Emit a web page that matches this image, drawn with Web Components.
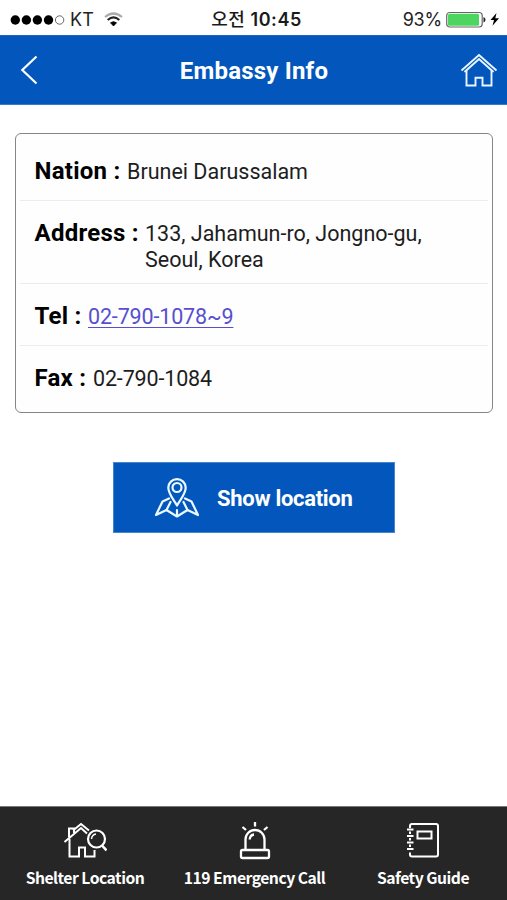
<!DOCTYPE html>
<html lang="en">
<head>
<meta charset="utf-8">
<title>Embassy Info</title>
<style>
html,body{margin:0;height:100%;background:#fff}
body{font-family:Roboto,"Noto Sans CJK KR",sans-serif;overflow:hidden}
</style>
</head>
<body>
<embassy-app></embassy-app>
<script>
const define=(name,html)=>{
  const t=document.createElement('template');t.innerHTML=html;
  customElements.define(name,class extends HTMLElement{
    constructor(){super();this.attachShadow({mode:'open'}).appendChild(t.content.cloneNode(true));}
  });
};

define('status-bar',`<style>
:host{display:grid;grid-template-columns:1fr auto 1fr;align-items:center;height:35px;box-sizing:border-box;padding:4px 8px 0 10px;background:#fff;color:#222;font:19px/30px Inter,"Noto Sans CJK KR",sans-serif}
div{display:flex;align-items:center}
.r{justify-content:flex-end}
svg{display:block;flex:none}
.kt{margin:0 10px 0 5px;font-size:18px;letter-spacing:.2px}
.time{font-weight:600;font-size:18px;color:#1a1a1a;white-space:pre;letter-spacing:.55px;margin-left:4px}
.time span{font-weight:500}
.pct{font-size:18px;margin-right:4px;letter-spacing:-.2px}
</style>
<div><svg width="55" height="12" viewBox="0 0 55 12"><g fill="#000"><circle cx="5.3" cy="6" r="4.7"/><circle cx="16.4" cy="6" r="4.7"/><circle cx="27.4" cy="6" r="4.7"/><circle cx="38.5" cy="6" r="4.7"/></g><circle cx="49.6" cy="6" r="4.2" fill="none" stroke="#666"/></svg>
<span class="kt">KT</span>
<svg width="19" height="15" viewBox="0 0 19 15" fill="none" stroke-width="2.2"><path d="M1 5Q9.500-2 18 5" stroke="#aaa"/><path d="M3.700 8Q9.500 2.800 15.300 8" stroke="#222"/><path d="M6.500 10.800Q9.500 8.500 12.500 10.800L9.500 14Z" fill="#000" stroke="#000" stroke-width=".8"/></svg></div>
<div class="time"><span>오전</span> 10:45</div>
<div class="r"><span class="pct">93%</span><svg width="53" height="18" viewBox="0 0 53 18"><rect x=".7" y="1.500" width="35.500" height="14.500" rx="3" fill="#fff" stroke="#666" stroke-width="1.200"/><rect x="2" y="2.800" width="31" height="12" rx="1.500" fill="#4cd65f"/><path d="M37.500 6q2 .5 2 2.700t-2 2.700z" fill="#222"/><path d="M50.500 2L44.500 9H48L46.500 14.800L53 7.300H49.300Z" fill="#000"/></svg></div>`);

define('title-bar',`<style>
:host{display:grid;grid-template-columns:38px 1fr 38px;align-items:center;height:70px;box-sizing:border-box;padding:0 9px 0 10px;background:#0357bc;border-top:1px solid #1c66bb;border-bottom:1px solid #3a7bc8;color:#fff}
h1{margin:2px 0 0;text-align:center;font-size:24px;line-height:30px;font-weight:700;letter-spacing:.2px}
svg{display:block}
.home{justify-self:end}
</style>
<svg width="38" height="36" viewBox="0 0 38 36" fill="none" stroke="#fff" stroke-width="2.200"><path d="M26.500 4.500L12.300 18L26.500 31.500"/></svg>
<h1><slot></slot></h1>
<svg class="home" width="38" height="36" viewBox="0 0 38 36" fill="none" stroke="#e8f6ff" stroke-width="1.900"><path d="M1.500 18.500L19 3L36.500 18.500"/><path d="M4.500 20L19 7L33.500 20"/><path d="M6.500 18.500V33.500H15.500V25.800H22.500V33.500H31.500V18.500"/></svg>`);

define('info-row',`<style>
:host{display:flex;align-items:baseline;box-sizing:border-box;padding:19px 14px 0 15px;border-bottom:1px solid #ececec;line-height:26px}
:host(:last-child){border-bottom:0}
b{flex:none;width:var(--label);margin-left:-.5px;margin-right:.5px;font-size:24px;font-weight:700;color:#000;white-space:nowrap;letter-spacing:.25px}
.v{font-size:21.500px;color:#1d1d1d;white-space:nowrap;letter-spacing:var(--vs,0)}
</style><b><slot name="label"></slot></b><div class="v"><slot></slot></div>`);

define('info-card',`<style>
:host{display:block;box-sizing:border-box;margin:28px 14px 0 15px;height:280px;border:1px solid #858585;border-radius:6px;padding:0 4px;background:#fefefe}
</style><slot></slot>`);

define('location-button',`<style>
:host{display:flex;align-items:center;box-sizing:border-box;width:282px;height:71px;margin:49px auto 0 113px;padding-left:40px;background:#0357bc;border:1px solid #4684cc;color:#fff;font-size:22px;font-weight:700;line-height:28px;white-space:nowrap;letter-spacing:-.3px}
svg{margin-right:17px;flex:none}
span{margin-top:3px}
</style>
<svg width="46" height="42" viewBox="0 0 46 42" fill="none" stroke="#eafaff" stroke-width="2.200" stroke-linejoin="round" stroke-linecap="round"><path d="M23 28.500C20 23 14.300 17 14.300 10.800A8.700 8.700 0 0 1 31.700 10.800C31.700 17 26 23 23 28.500Z"/><circle cx="23" cy="10.500" r="4.500"/><path d="M15 21.500L8.500 24.500L2 38L12.500 33L23 39.500L33.500 33L44 38L37.500 24.500L31 21.500"/><path d="M16.500 25L12.500 33M29.500 25L33.500 33M23 33V38.500"/></svg><span><slot></slot></span>`);

define('tab-item',`<style>
:host{display:flex;flex-direction:column;align-items:center;color:#fff;font:700 15.700px/24px "Noto Sans CJK KR",sans-serif;white-space:nowrap}
.i{height:47px;display:flex;align-items:flex-end}
.t{margin-top:4px;letter-spacing:-.5px}
</style><div class="i"><slot name="icon"></slot></div><div class="t"><slot></slot></div>`);

define('tab-bar',`<style>
:host{display:grid;grid-template-columns:170px 169px 168px;height:94px;box-sizing:border-box;padding-top:8px;border-top:1px solid #777;background:#262626}
svg{display:block;fill:none;stroke:#fff;stroke-width:2}
</style>
<tab-item><svg slot="icon" width="44" height="40" viewBox="0 0 44 40"><path d="M1.500 20L18 6L24 11.500"/><path d="M6 15.500V6.500H11V11"/><path d="M10 8.500L18 2L26 8.500" /><path d="M6.500 17V34.500H16V25.500H22V34.500H31.500V28"/><circle cx="33.500" cy="17" r="8.500" stroke-width="2.200"/><path d="M28.500 17Q29 12.500 33 12" stroke-width="1.500"/><path d="M39 23.500L43.500 28.500" stroke-width="2.600"/></svg>Shelter Location</tab-item>
<tab-item><svg slot="icon" width="32" height="40" viewBox="0 0 32 40" style="stroke-width:2.300"><path d="M6.500 27.500V17.500A9.500 9.500 0 0 1 25.500 17.500V27.500M10.700 17.500Q11 13 15 12.500"/><rect x="2" y="28" width="28" height="8" rx="1.500"/><path d="M16 0V4.500M3.500 5L7 8M28.500 5L25 8"/></svg>119 Emergency Call</tab-item>
<tab-item><svg slot="icon" width="34" height="40" viewBox="0 0 34 40"><path d="M4 6V4Q4 2 6 2H30Q32 2 32 4V32.500Q32 34.500 30 34.500H6Q4 34.500 4 32.500V30.500M4 9.500V12M4 16V18.500M4 22.500V25"/><path d="M1 7.500H7.500M1 14H7.500M1 20.500H7.500M1 27H7.500"/><rect x="11.500" y="9.500" width="14" height="7"/></svg>Safety Guide</tab-item>`);

define('embassy-app',`<style>
:host{display:flex;flex-direction:column;height:100vh}
main{flex:1}
a{color:#574fd0;text-decoration:underline;text-decoration-thickness:1px;text-underline-offset:3px}
</style>
<status-bar></status-bar>
<title-bar>Embassy Info</title-bar>
<main>
<info-card>
<info-row style="height:67px;padding-top:24px;--label:92px"><span slot="label">Nation :</span>Brunei Darussalam</info-row>
<info-row style="height:83px;--label:110px"><span slot="label">Address :</span>133, Jahamun-ro, Jongno-gu,<br>Seoul, Korea</info-row>
<info-row style="height:62px;--label:53px;--vs:-.15px"><span slot="label">Tel :</span><a>02-790-1078~9</a></info-row>
<info-row style="height:66px;--label:58px;--vs:-.15px"><span slot="label">Fax :</span>02-790-1084</info-row>
</info-card>
<location-button>Show location</location-button>
</main>
<tab-bar></tab-bar>`);
</script>
</body>
</html>
